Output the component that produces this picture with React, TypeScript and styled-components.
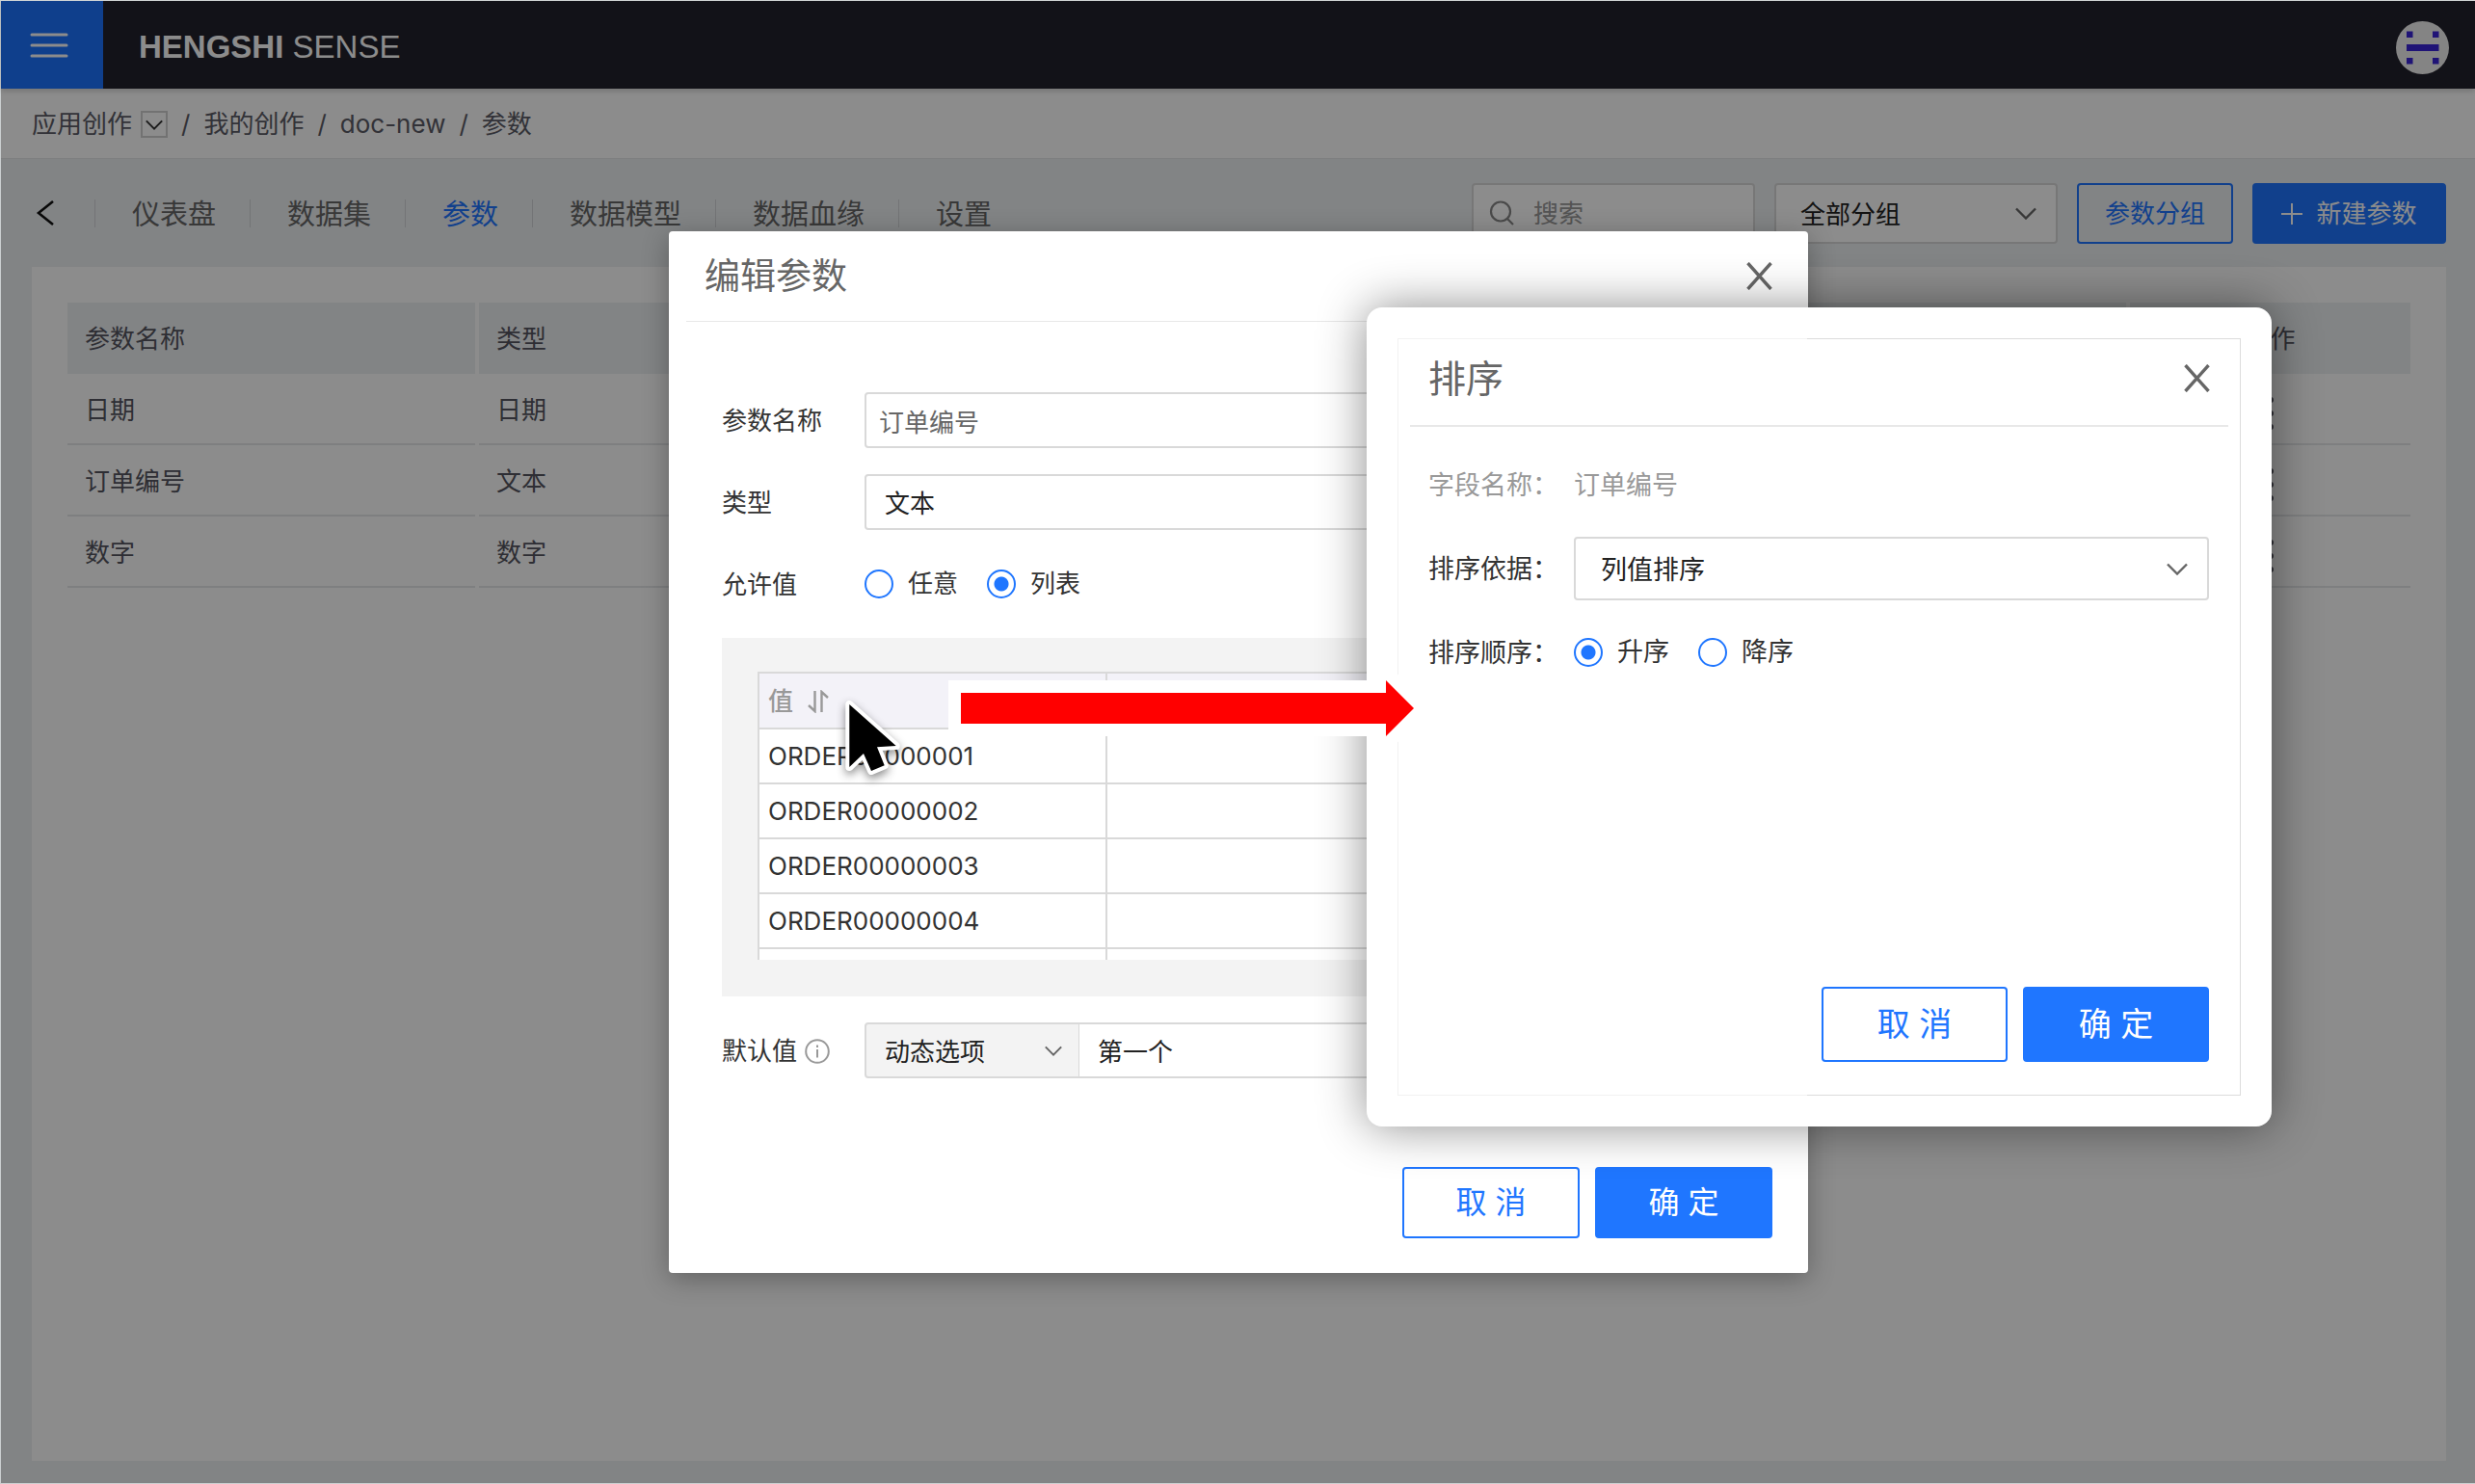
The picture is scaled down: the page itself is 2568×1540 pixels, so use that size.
import React from "react";
import styled, { createGlobalStyle, css } from "styled-components";

const BLUE = "#1f76ff";
const LINE = "#d9d9d9";

const GlobalStyle = createGlobalStyle`
  *, *::before, *::after { box-sizing: border-box; }
  body {
    margin: 0;
    font-family: Inter, "Noto Sans CJK SC", sans-serif;
    font-size: 26px;
    line-height: 36px;
    color: #333;
  }
  button, input, select { font: inherit; color: inherit; margin: 0; }
  h1, h2, p { margin: 0; font-weight: 400; }
  a { color: inherit; text-decoration: none; }
`;

/* ---------- page ---------- */

const Page = styled.div`
  position: relative;
  display: flex;
  flex-direction: column;
  min-height: 100vh;
  background: #edf0f3;
  border: 1px solid #cbcfd0;
  border-top-color: #dadede;
  border-right: 0;
`;

const TopBar = styled.header`
  display: flex;
  align-items: center;
  height: 91px;
  padding-right: 27px;
  background: #22212c;
  box-shadow: 0 2px 6px rgba(0, 0, 0, 0.2);
  z-index: 0;
`;

const MenuButton = styled.button`
  display: flex;
  align-items: center;
  align-self: stretch;
  width: 106px;
  padding: 0 30px;
  border: 0;
  background: #1d73ff;
`;

const Brand = styled.h1`
  flex: 1;
  margin-left: 37px;
  padding-top: 4px;
  font-family: "Liberation Sans", Arial, sans-serif;
  font-size: 33px;
  line-height: 40px;
  color: #fff;
`;

const AvatarButton = styled.button`
  display: flex;
  padding: 6px 0 0;
  border: 0;
  background: none;
`;

const Crumbs = styled.nav`
  display: flex;
  align-items: center;
  gap: 14px;
  height: 73px;
  padding: 2px 0 0 32px;
  background: #fff;
  border-bottom: 1px solid #e6e8ea;
  color: #5c5c66;
`;

const CrumbGroup = styled.span`
  display: flex;
  align-items: center;
  gap: 9px;
`;

const CrumbToggle = styled.button`
  display: grid;
  place-items: center;
  width: 28px;
  height: 28px;
  padding: 0;
  border: 2px solid #d0d0d0;
  background: none;
  color: #333;
`;

const Toolbar = styled.div`
  display: flex;
  align-items: center;
  height: 112px;
  padding: 0 30px 0 36px;
`;

const BackButton = styled.button`
  display: flex;
  width: 61px;
  padding: 0;
  border: 0;
  background: none;
  color: #111;
`;

const Tabs = styled.nav`
  display: flex;
  flex: 1;
`;

const Tab = styled.a<{ $active?: boolean }>`
  height: 29px;
  padding: 0 35px 0 38px;
  border-left: 1px solid #d2d4d8;
  font-size: 29px;
  line-height: 32px;
  color: ${(p) => (p.$active ? BLUE : "#666")};
`;

const Tools = styled.div`
  display: flex;
  gap: 20px;
`;

const SearchBox = styled.label`
  display: flex;
  align-items: center;
  gap: 20px;
  width: 294px;
  height: 63px;
  padding-left: 16px;
  border: 2px solid ${LINE};
  border-radius: 4px;
  background: #fff;
  color: #888;
`;

const SearchInput = styled.input`
  flex: 1;
  min-width: 0;
  padding: 2px 0 0;
  border: 0;
  outline: 0;
  background: none;
  &::placeholder { color: #999; opacity: 1; }
`;

const controlBox = css`
  border: 2px solid ${LINE};
  border-radius: 4px;
  background: #fff;
`;

const SelectWrap = styled.span<{ $width?: number; $tall?: number; $joined?: "start" | "end" }>`
  display: flex;
  align-items: center;
  height: ${(p) => p.$tall ?? 58}px;
  padding-right: 20px;
  color: #666;
  ${controlBox}
  ${(p) => (p.$width ? `flex: 0 0 ${p.$width}px;` : "flex: 1;")}
  ${(p) => p.$joined === "start" && "background: #f3f3f3; border-radius: 4px 0 0 4px; padding-right: 17px; border-right-width: 1px;"}
  ${(p) => p.$joined === "end" && "border-radius: 0 4px 4px 0; border-left: 0;"}
`;

const SelectField = styled.select<{ $inset?: number }>`
  flex: 1;
  height: 100%;
  min-width: 0;
  padding: 3px 0 0 ${(p) => p.$inset ?? 19}px;
  border: 0;
  outline: 0;
  background: none;
  color: #222;
  appearance: none;
`;

const ActionButton = styled.button<{ $primary?: boolean; $size: "tool" | "dialog" | "large" }>`
  display: flex;
  align-items: center;
  justify-content: center;
  gap: 14px;
  padding: 0;
  border: 2px solid ${BLUE};
  border-radius: 4px;
  background: ${(p) => (p.$primary ? BLUE : "transparent")};
  color: ${(p) => (p.$primary ? "#fff" : BLUE)};
  ${(p) => p.$size === "tool" && `height: 63px; width: ${p.$primary ? 201 : 162}px; padding-top: 2px;`}
  ${(p) => p.$size === "dialog" && "height: 74px; width: 184px; font-size: 32px;"}
  ${(p) => p.$size === "large" && "height: 78px; width: 193px; font-size: 34px;"}
`;

const Panel = styled.main`
  flex: 1;
  margin: 0 30px 23px 32px;
  padding: 37px;
  background: #fff;
`;

const ParamTable = styled.table`
  width: calc(100% + 8px);
  margin: 0 -4px;
  border-spacing: 4px 0;
  table-layout: fixed;
  color: #555560;
  th, td {
    height: 74px;
    padding: 2px 18px 0;
    text-align: left;
    font-weight: 400;
  }
  th { background: #edf0f3; }
  td {
    padding-top: 4px;
    border-bottom: 2px solid #e6e8ea;
  }
  th:last-child, td:last-child { text-align: center; }
`;

const Col = styled.col<{ $width?: number }>`
  ${(p) => p.$width && `width: ${p.$width}px;`}
`;

const MoreButton = styled.button`
  padding: 6px 4px 0;
  border: 0;
  background: none;
  line-height: 0;
  vertical-align: middle;
`;

/* ---------- dialogs ---------- */

const Mask = styled.div`
  position: absolute;
  inset: 0;
  z-index: 1;
  display: flex;
  justify-content: center;
  align-items: flex-start;
  padding: 239px 0 0 1px;
  background: rgba(0, 0, 0, 0.45);
`;

const EditDialog = styled.section`
  position: relative;
  width: 1182px;
  background: #fff;
  border-radius: 4px;
  box-shadow: 0 6px 28px rgba(0, 0, 0, 0.3);
`;

const SortDialog = styled.section`
  position: absolute;
  left: 724px;
  top: 79px;
  width: 939px;
  padding: 32px;
  background: #fff;
  border-radius: 16px;
  box-shadow: 0 0 50px rgba(0, 0, 0, 0.45);
`;

const SortFrame = styled.div`
  display: flex;
  flex-direction: column;
  min-height: 786px;
  border: 1px solid;
  border-image: linear-gradient(to right, #f2f2f2 425px, #dcdcdc 425px) 1;
`;

const DialogHead = styled.header<{ $large?: boolean }>`
  display: flex;
  align-items: center;
  justify-content: space-between;
  border-bottom: 1px solid #e8e8e8;
  color: #666;
  height: ${(p) => (p.$large ? 91 : 94)}px;
  margin: 0 ${(p) => (p.$large ? 12 : 18)}px;
  padding: 0 19px;
  ${(p) => p.$large && "border-bottom-width: 2px; padding-bottom: 8px;"}
`;

const DialogTitle = styled.h2<{ $large?: boolean }>`
  font-size: ${(p) => (p.$large ? 39 : 37)}px;
  line-height: 48px;
`;

const CloseButton = styled.button`
  display: flex;
  padding: 0;
  border: 0;
  background: none;
`;

const EditBody = styled.div`
  display: flex;
  flex-direction: column;
  gap: 27px;
  padding: 73px 55px 92px;
`;

const SortBody = styled.div`
  display: flex;
  flex: 1;
  flex-direction: column;
  gap: 21px;
  padding: 27px 32px 0 31px;
  font-size: 27px;
`;

const Row = styled.div<{ $large?: boolean; $muted?: boolean }>`
  display: grid;
  align-items: center;
  grid-template-columns: ${(p) => (p.$large ? 151 : 148)}px 1fr;
  height: ${(p) => (p.$large ? 66 : 58)}px;
  ${(p) => p.$muted && "color: #999; padding-top: 2px;"}
`;

const RowLabel = styled.label`
  display: flex;
  align-items: center;
  gap: 8px;
  padding-top: 2px;
  white-space: nowrap;
`;

const TextInput = styled.input`
  height: 58px;
  width: 100%;
  padding: 0 13px;
  outline: 0;
  ${controlBox}
  color: #666;
`;

const JoinedFields = styled.div`
  display: flex;
`;

const RadioGroup = styled.div`
  display: flex;
  gap: 30px;
`;

const RadioLabel = styled.label`
  display: flex;
  align-items: center;
  gap: 15px;
`;

const Radio = styled.input`
  width: 30px;
  height: 30px;
  border: 2px solid ${BLUE};
  border-radius: 50%;
  background: #fff;
  appearance: none;
  &:checked {
    background: radial-gradient(circle, ${BLUE} 7px, #fff 8px);
  }
`;

const ValueBox = styled.div`
  padding: 35px 37px 38px;
  background: #f3f3f3;
`;

const ValueScroll = styled.div`
  height: 299px;
  overflow: hidden;
  background: #fff;
`;

const ValueTable = styled.table`
  width: 100%;
  border-collapse: collapse;
  table-layout: fixed;
  th, td {
    height: 57px;
    padding: 0 9px;
    border: 2px solid ${LINE};
    text-align: left;
  }
  th {
    height: 58px;
    background: #f3f2f8;
    font-weight: 500;
    color: #999;
  }
`;

const SortButton = styled.button`
  display: flex;
  align-items: center;
  gap: 14px;
  padding: 2px 0 0;
  border: 0;
  background: none;
`;

const Actions = styled.footer<{ $large?: boolean }>`
  display: flex;
  justify-content: flex-end;
  gap: 16px;
  padding: ${(p) => (p.$large ? "0 32px 34px" : "0 37px 36px")};
`;

const PointerArrow = styled.svg`
  position: absolute;
  left: 290px;
  top: 440px;
`;

const Cursor = styled.svg`
  position: absolute;
  left: 176px;
  top: 480px;
  overflow: visible;
  filter: drop-shadow(0 4px 5px rgba(0, 0, 0, 0.45));
`;

/* ---------- icons ---------- */

const Chevron = ({ width = 22 }: { width?: number }) => (
  <svg width={width} height={width / 2 + 2} viewBox="0 0 22 13" fill="none" stroke="currentColor" strokeWidth="2.4" aria-hidden="true">
    <path d="M1 1.5 11 11.5 21 1.5" />
  </svg>
);

const CloseIcon = () => (
  <svg width="27" height="29" viewBox="0 0 27 29" stroke="#666" strokeWidth="3.4" aria-hidden="true">
    <path d="M1.500 1 25.500 28M25.500 1 1.500 28" />
  </svg>
);

const MoreIcon = () => (
  <svg width="6" height="34" viewBox="0 0 6 34" fill="#555560" aria-hidden="true">
    <circle cx="3" cy="3" r="3" />
    <circle cx="3" cy="17" r="3" />
    <circle cx="3" cy="31" r="3" />
  </svg>
);

/* ---------- content ---------- */

const tabs = ["仪表盘", "数据集", "参数", "数据模型", "数据血缘", "设置"];

const params = [
  { name: "日期", type: "日期" },
  { name: "订单编号", type: "文本" },
  { name: "数字", type: "数字" },
];

const orders = ["ORDER00000001", "ORDER00000002", "ORDER00000003", "ORDER00000004", ""];

export default function App() {
  return (
    <>
      <GlobalStyle />
      <Page>
        <TopBar>
          <MenuButton aria-label="菜单">
            <svg width="40" height="28" viewBox="0 0 40 28" stroke="#fff" strokeWidth="3" strokeLinecap="round">
              <path d="M2 3H38M2 14H38M2 25H38" />
            </svg>
          </MenuButton>
          <Brand>
            <b>HENGSHI</b> SENSE
          </Brand>
          <AvatarButton aria-label="账户">
            <svg width="55" height="55" viewBox="0 0 55 55">
              <circle cx="27.5" cy="27.5" r="27.5" fill="#f0f0f0" />
              <path
                fill="#3a24d8"
                d="M11 10.500h6.500v6.500h-6.500zM38 10.500h6.500v6.500h-6.500zM11 24h33.500v7H11zM11 38h6.500v6.500h-6.500zM38 38h6.500v6.500h-6.500z"
              />
            </svg>
          </AvatarButton>
        </TopBar>

        <Crumbs>
          <CrumbGroup>
            <a href="#apps">应用创作</a>
            <CrumbToggle aria-label="切换">
              <Chevron width={18} />
            </CrumbToggle>
          </CrumbGroup>
          <span>/</span>
          <a href="#mine">我的创作</a>
          <span>/</span>
          <a href="#doc-new">doc-new</a>
          <span>/</span>
          <span>参数</span>
        </Crumbs>

        <Toolbar>
          <BackButton aria-label="返回">
            <svg width="20" height="26" viewBox="0 0 20 26" fill="none" stroke="currentColor" strokeWidth="2.6">
              <path d="M18 1 3 13 18 25" />
            </svg>
          </BackButton>
          <Tabs>
            {tabs.map((tab) => (
              <Tab key={tab} href="#tab" $active={tab === "参数"}>
                {tab}
              </Tab>
            ))}
          </Tabs>
          <Tools>
            <SearchBox>
              <svg width="26" height="26" viewBox="0 0 26 26" fill="none" stroke="currentColor" strokeWidth="2.2" aria-hidden="true">
                <circle cx="12" cy="11.500" r="10" />
                <path d="M18.500 18.500 25 25" />
              </svg>
              <SearchInput placeholder="搜索" aria-label="搜索" />
            </SearchBox>
            <SelectWrap $width={294} $tall={63}>
              <SelectField aria-label="分组" $inset={25}>
                <option>全部分组</option>
              </SelectField>
              <Chevron />
            </SelectWrap>
            <ActionButton $size="tool">参数分组</ActionButton>
            <ActionButton $size="tool" $primary>
              <svg width="22" height="22" viewBox="0 0 22 22" stroke="currentColor" strokeWidth="2" aria-hidden="true">
                <path d="M11 0V22M0 11H22" />
              </svg>
              新建参数
            </ActionButton>
          </Tools>
        </Toolbar>

        <Panel>
          <ParamTable>
            <colgroup>
              <Col $width={423} />
              <Col />
              <Col $width={291} />
            </colgroup>
            <thead>
              <tr>
                <th>参数名称</th>
                <th>类型</th>
                <th>操作</th>
              </tr>
            </thead>
            <tbody>
              {params.map((param) => (
                <tr key={param.name}>
                  <td>{param.name}</td>
                  <td>{param.type}</td>
                  <td>
                    <MoreButton aria-label="更多">
                      <MoreIcon />
                    </MoreButton>
                  </td>
                </tr>
              ))}
            </tbody>
          </ParamTable>
        </Panel>

        <Mask>
          <EditDialog role="dialog" aria-labelledby="edit-title">
            <DialogHead>
              <DialogTitle id="edit-title">编辑参数</DialogTitle>
              <CloseButton aria-label="关闭">
                <CloseIcon />
              </CloseButton>
            </DialogHead>
            <EditBody>
              <Row>
                <RowLabel htmlFor="param-name">参数名称</RowLabel>
                <TextInput id="param-name" defaultValue="订单编号" />
              </Row>
              <Row>
                <RowLabel htmlFor="param-type">类型</RowLabel>
                <SelectWrap>
                  <SelectField id="param-type">
                    <option>文本</option>
                  </SelectField>
                  <Chevron />
                </SelectWrap>
              </Row>
              <Row>
                <RowLabel as="span">允许值</RowLabel>
                <RadioGroup>
                  <RadioLabel>
                    <Radio type="radio" name="allowed" />
                    任意
                  </RadioLabel>
                  <RadioLabel>
                    <Radio type="radio" name="allowed" defaultChecked />
                    列表
                  </RadioLabel>
                </RadioGroup>
              </Row>
              <ValueBox>
                <ValueScroll>
                  <ValueTable>
                    <colgroup>
                      <Col $width={361} />
                      <Col />
                    </colgroup>
                    <thead>
                      <tr>
                        <th>
                          <SortButton>
                            值
                            <svg width="24" height="24" viewBox="0 0 24 24" fill="none" stroke="#999" strokeWidth="2.4" aria-label="排序">
                              <path d="M2 16 8.500 22V1M15.500 23V2L22 8" />
                            </svg>
                          </SortButton>
                        </th>
                        <th />
                      </tr>
                    </thead>
                    <tbody>
                      {orders.map((order) => (
                        <tr key={order}>
                          <td>{order}</td>
                          <td />
                        </tr>
                      ))}
                    </tbody>
                  </ValueTable>
                </ValueScroll>
              </ValueBox>
              <Row>
                <RowLabel htmlFor="default-mode">
                  默认值
                  <svg width="26" height="26" viewBox="0 0 26 26" fill="none" stroke="#999" strokeWidth="2" aria-hidden="true">
                    <circle cx="13" cy="13" r="11.800" />
                    <path d="M13 11V19.500M13 6.500V9" />
                  </svg>
                </RowLabel>
                <JoinedFields>
                  <SelectWrap $width={223} $joined="start">
                    <SelectField id="default-mode">
                      <option>动态选项</option>
                    </SelectField>
                    <Chevron width={18} />
                  </SelectWrap>
                  <SelectWrap $joined="end">
                    <SelectField aria-label="默认选项">
                      <option>第一个</option>
                    </SelectField>
                    <Chevron />
                  </SelectWrap>
                </JoinedFields>
              </Row>
            </EditBody>
            <Actions>
              <ActionButton $size="dialog">取 消</ActionButton>
              <ActionButton $size="dialog" $primary>
                确 定
              </ActionButton>
            </Actions>

            <SortDialog role="dialog" aria-labelledby="sort-title">
              <SortFrame>
                <DialogHead $large>
                  <DialogTitle id="sort-title" $large>
                    排序
                  </DialogTitle>
                  <CloseButton aria-label="关闭">
                    <CloseIcon />
                  </CloseButton>
                </DialogHead>
                <SortBody>
                  <Row $large $muted>
                    <span>字段名称：</span>
                    <span>订单编号</span>
                  </Row>
                  <Row $large>
                    <RowLabel htmlFor="sort-by">排序依据：</RowLabel>
                    <SelectWrap $tall={66}>
                      <SelectField id="sort-by" $inset={26}>
                        <option>列值排序</option>
                      </SelectField>
                      <Chevron />
                    </SelectWrap>
                  </Row>
                  <Row $large>
                    <RowLabel as="span">排序顺序：</RowLabel>
                    <RadioGroup>
                      <RadioLabel>
                        <Radio type="radio" name="order" defaultChecked />
                        升序
                      </RadioLabel>
                      <RadioLabel>
                        <Radio type="radio" name="order" />
                        降序
                      </RadioLabel>
                    </RadioGroup>
                  </Row>
                </SortBody>
                <Actions $large>
                  <ActionButton $size="large">取 消</ActionButton>
                  <ActionButton $size="large" $primary>
                    确 定
                  </ActionButton>
                </Actions>
              </SortFrame>
            </SortDialog>

            <PointerArrow width="500" height="110" viewBox="0 0 500 110" aria-hidden="true">
              <path
                d="M13 39H454V26L483 55 454 84V71H13Z"
                fill="#f00"
                stroke="#fff"
                strokeWidth="26"
                paintOrder="stroke"
              />
            </PointerArrow>
            <Cursor width="70" height="90" viewBox="0 0 70 90" aria-hidden="true">
              <path
                d="M11.300 11V76L26 62 34 80 47.700 74.300 40 55.300 59.700 54Z"
                fill="#000"
                stroke="#fff"
                strokeWidth="8"
                strokeLinejoin="round"
                paintOrder="stroke"
              />
            </Cursor>
          </EditDialog>
        </Mask>
      </Page>
    </>
  );
}
